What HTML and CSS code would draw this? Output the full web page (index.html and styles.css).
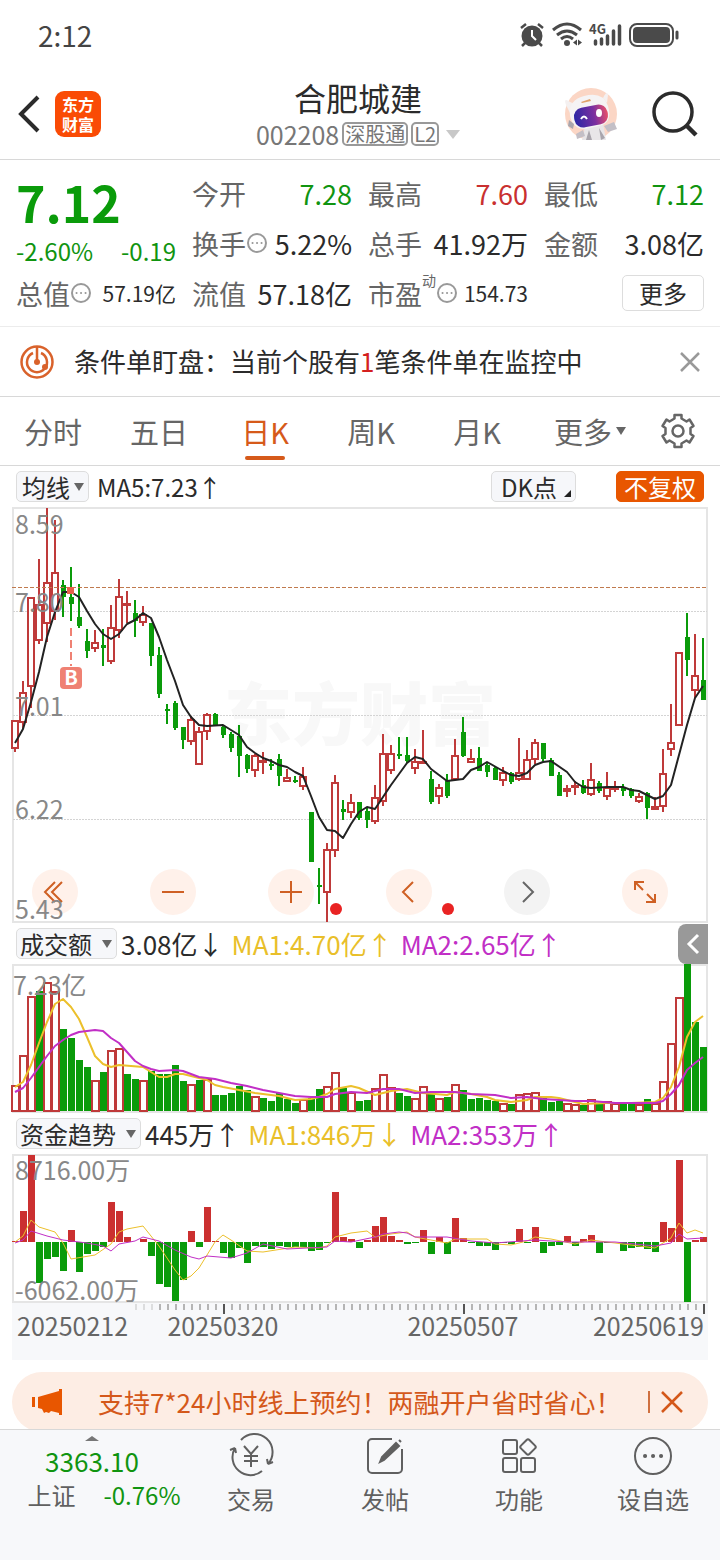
FILE: index.html
```html
<!DOCTYPE html>
<html lang="zh-CN">
<head>
    <meta charset="UTF-8">
    <meta name="viewport" content="width=device-width, initial-scale=1.0">
    <title>合肥城建 002208</title>
    <link rel="stylesheet" href="styles.css">
</head>
<body>

<div class="status-bar">
    <span>2:12</span>
    <svg width="160" height="28" viewBox="0 0 160 28" fill="none" stroke="#4a4a4a">
        <!-- alarm -->
        <circle cx="12" cy="15" r="10.500" fill="#4a4a4a" stroke="none"/>
        <path d="M1 7l5-4M23 7l-5-4M5 22l-3 3M19 22l3 3" stroke-width="2.500"/>
        <path d="M12 9v6l4 4" stroke="#fff" stroke-width="2"/>
        <!-- wifi -->
        <path d="M33 9q14-12 28 0M37 14q10-8 20 0M41 18q6-5 12 0" stroke-width="3"/>
        <circle cx="47" cy="22" r="3" fill="#4a4a4a" stroke="none"/>
        <path d="M57 18.500v6l-4-3zM58 18.500v6l4-3z" fill="#4a4a4a" stroke="none"/>
        <!-- signal -->
        <text x="69" y="13" class="net-type">4G</text>
        <path d="M75.500 20v3M81.500 18v5M87.500 15v8M93.500 10v13M99.500 5v18" stroke-width="3.500" stroke-linecap="round"/>
        <!-- battery -->
        <rect x="110" y="3" width="43" height="22" rx="7" stroke-width="2"/>
        <rect x="113" y="6" width="37" height="16" rx="4" fill="#4a4a4a" stroke="none"/>
        <path d="M157 11v6" stroke-width="3" stroke-linecap="round"/>
    </svg>
</div>

<div class="header">
    <div class="header-left">
        <button class="icon-btn" aria-label="返回">
            <svg width="22" height="38" viewBox="0 0 22 38" fill="none" stroke="#2b2b2b" stroke-width="4"><path d="M20 2L3 19l17 17"/></svg>
        </button>
        <a href="#" class="logo">东方<br>财富</a>
    </div>
    <div class="header-title">
        <h1>合肥城建</h1>
        <div class="stock-code">
            <span>002208</span>
            <span class="tag">深股通</span>
            <span class="tag">L2</span>
            <i class="caret-light"></i>
        </div>
    </div>
    <div class="header-right">
        <button class="icon-btn" aria-label="助手">
            <svg width="54" height="54" viewBox="0 0 54 54">
                <circle cx="27" cy="27" r="26" fill="#fbd6c5"/>
                <path d="M2 18q-3-8 4-3l5 2-5 9zM39 11q4-8 5-3l-1 8z" fill="#f4f0f0"/>
                <path d="M18 53l3-14 18-3 3 17z" fill="#e8e6e8"/>
                <path d="M25 43l-3 10h6zM35 41l2 12 4-2z" fill="#a9a5ac"/>
                <path d="M40 39l10-4 3 7-9 3zM19 43l-7 4 1 5 8-3z" fill="#c3bfc6"/>
                <path d="M6 29Q4 13 20 9q19-5 24 10 5 17-9 20l-14 3Q9 42 6 29z" fill="#f5f3f4"/>
                <path d="M17 15l9-3 1 2-9 2z" fill="#e0a26a"/>
                <path d="M5 33l5 4-1 5-5-3z" fill="#aaa6ad"/>
                <rect x="10" y="19" width="34" height="20" rx="9" fill="url(#visor)" transform="rotate(-11 27 29)"/>
                <path d="M17 32q3-5 6 0" fill="none" stroke="#fff" stroke-width="2"/>
                <ellipse cx="35" cy="26" rx="3" ry="4" fill="#fff"/>
                <defs>
                    <linearGradient id="visor"><stop offset="0" stop-color="#2b27a5"/><stop offset=".6" stop-color="#7b2fa0"/><stop offset="1" stop-color="#e8506a"/></linearGradient>
                </defs>
            </svg>
        </button>
        <button class="icon-btn" aria-label="搜索">
            <svg width="46" height="46" viewBox="0 0 46 46" fill="none" stroke="#2b2b2b" stroke-width="3.500"><circle cx="21" cy="21" r="19"/><path d="M34 34l10 10" stroke-width="4.500"/></svg>
        </button>
    </div>
</div>

<div class="quote">
    <div class="price down">
        <strong>7.12</strong>
        <div class="change"><span>-2.60%</span><span>-0.19</span></div>
    </div>
    <div class="cell"><span>今开</span><b class="down">7.28</b></div>
    <div class="cell"><span>最高</span><b class="up">7.60</b></div>
    <div class="cell"><span>最低</span><b class="down">7.12</b></div>
    <div class="cell"><span>换手<svg class="dots" viewBox="0 0 20 20"><circle cx="10" cy="10" r="9"/><path d="M5.500 10h.1M10 10h.1M14.500 10h.1"/></svg></span><b>5.22%</b></div>
    <div class="cell"><span>总手</span><b>41.92万</b></div>
    <div class="cell"><span>金额</span><b>3.08亿</b></div>
    <div class="cell"><span>总值<svg class="dots" viewBox="0 0 20 20"><circle cx="10" cy="10" r="9"/><path d="M5.500 10h.1M10 10h.1M14.500 10h.1"/></svg></span><b class="small">57.19亿</b></div>
    <div class="cell"><span>流值</span><b>57.18亿</b></div>
    <div class="cell"><span>市盈<sup>动</sup><svg class="dots" viewBox="0 0 20 20"><circle cx="10" cy="10" r="9"/><path d="M5.500 10h.1M10 10h.1M14.500 10h.1"/></svg></span><b class="small">154.73</b></div>
    <div class="cell cell-more"><button class="more-btn">更多</button></div>
</div>

<div class="notice">
    <svg width="34" height="34" viewBox="0 0 34 34" fill="none" stroke="#d9622b" stroke-width="2.500">
        <circle cx="17" cy="17" r="15.500"/>
        <path d="M13 8a10 10 0 1 0 8 0M17 2v15"/>
        <circle cx="17" cy="17" r="3" fill="#d9622b" stroke="none"/>
        <circle cx="25" cy="22" r="3" fill="#d9622b" stroke="none"/>
    </svg>
    <p>条件单盯盘：当前个股有<em>1</em>笔条件单在监控中</p>
    <button class="icon-btn" aria-label="关闭">
        <svg width="20" height="20" viewBox="0 0 20 20" stroke="#999" stroke-width="2.500"><path d="M1 1l18 18M19 1L1 19"/></svg>
    </button>
</div>

<div class="tabs">
    <button>分时</button>
    <button>五日</button>
    <button class="active">日K</button>
    <button>周K</button>
    <button>月K</button>
    <button>更多<i class="caret"></i></button>
    <button class="gear" aria-label="设置">
        <svg width="36" height="36" viewBox="0 0 36 36" fill="none" stroke="#666" stroke-width="2.500" stroke-linejoin="round">
            <path d="M14.500 2h7v3.500l5 3 3-2 4 6.500-3 2v6l3 2-4 6.500-3-2-5 3V34h-7v-3.500l-5-3-3 2L2.500 23l3-2v-6l-3-2 4-6.500 3 2 5-3z"/>
            <circle cx="18" cy="18" r="5.500"/>
        </svg>
    </button>
</div>

<div class="charts">
    <div class="toolbar">
        <label class="chip"><select aria-label="指标"><option>均线</option></select><i class="caret"></i></label>
        <span class="ma5">MA5:7.23↑</span>
        <button class="chip dk">DK点<i class="corner"></i></button>
        <button class="chip adjust">不复权</button>
    </div>

    <div class="chart-box">
        <div class="chart-controls">
            <button aria-label="最左"><svg viewBox="0 0 46 46"><path d="M23 13L13 23l10 10M30 13L20 23l10 10"/></svg></button>
            <button aria-label="缩小"><svg viewBox="0 0 46 46"><path d="M12 23h22"/></svg></button>
            <button aria-label="放大"><svg viewBox="0 0 46 46"><path d="M12 23h22M23 12v22"/></svg></button>
            <button aria-label="左移"><svg viewBox="0 0 46 46"><path d="M27 13L17 23l10 10"/></svg></button>
            <button aria-label="右移" class="off"><svg viewBox="0 0 46 46"><path d="M19 13l10 10-10 10"/></svg></button>
            <button aria-label="全屏"><svg viewBox="0 0 46 46"><path d="M13 21v-8h9M13 13l8 8M33 25v8h-9M33 33l-8-8"/></svg></button>
        </div>
        <svg id="kline" class="chart" viewBox="12 507 696 416"></svg>
    </div>

    <div class="indicator">
        <label class="chip"><select aria-label="副图一" class="w3"><option>成交额</option></select><i class="caret"></i></label>
        <span>3.08亿↓</span>
        <span class="ma1">MA1:4.70亿↑</span>
        <span class="ma2">MA2:2.65亿↑</span>
        <button class="side-tab" aria-label="展开">
            <svg width="12" height="20" viewBox="0 0 12 20" fill="none" stroke="#fff" stroke-width="3"><path d="M11 1L2 10l9 9"/></svg>
        </button>
    </div>
    <svg id="volume" class="chart" viewBox="12 964 696 149"></svg>

    <div class="indicator">
        <label class="chip"><select aria-label="副图二" class="w4"><option>资金趋势</option></select><i class="caret"></i></label>
        <span>445万↑</span>
        <span class="ma1">MA1:846万↓</span>
        <span class="ma2">MA2:353万↑</span>
    </div>
    <svg id="flow" class="chart" viewBox="12 1154 696 149"></svg>
    <svg id="axis" class="chart axis" viewBox="12 1303 696 57"></svg>
</div>

<div class="banner-wrap">
    <div class="banner">
        <svg width="32" height="26" viewBox="0 0 32 26" fill="#e85600"><path d="M0 8h3v10H0zM6 8l21-6V0h3v26h-3v-2l-8-2-2 2-3-1-2 1-2-4-4-1z"/></svg>
        <a href="#">支持7*24小时线上预约！两融开户省时省心！</a>
        <button class="icon-btn" aria-label="关闭广告">
            <svg width="22" height="22" viewBox="0 0 22 22" stroke="#d4581a" stroke-width="2.500"><path d="M1 1l20 20M21 1L1 21"/></svg>
        </button>
    </div>
</div>

<div class="bottom-nav">
    <a href="#" class="index down">
        <i class="caret-up"></i>
        <b>3363.10</b>
        <span><small>上证</small>-0.76%</span>
    </a>
    <a href="#">
        <svg width="44" height="40" viewBox="0 0 44 40"><path d="M12 4a18 18 0 0 1 27 24M39 28l-1-5M39 28l5-2M33 35A18 18 0 0 1 6 12M6 12l1 5M6 12l-5 2"/><path d="M15 10l7 8 7-8M22 18v13M15 20h14M15 25h14"/></svg>
        交易
    </a>
    <a href="#">
        <svg width="38" height="40" viewBox="0 0 38 40"><path d="M26 3H6a4 4 0 0 0-4 4v26a4 4 0 0 0 4 4h26a4 4 0 0 0 4-4V13"/><path d="M14 26l2-5L30 7l3 3-15 14zM33 4l2 2" fill="#606060"/></svg>
        发帖
    </a>
    <a href="#">
        <svg width="36" height="40" viewBox="0 0 36 40"><rect x="2" y="4" width="14" height="14" rx="2"/><rect x="2" y="22" width="14" height="14" rx="2"/><rect x="20" y="22" width="14" height="14" rx="2"/><rect x="21" y="5" width="12" height="12" rx="2" transform="rotate(45 27 11)"/></svg>
        功能
    </a>
    <a href="#">
        <svg width="40" height="40" viewBox="0 0 40 40"><circle cx="20" cy="20" r="18"/><path d="M12 20h.1M20 20h.1M28 20h.1" stroke-width="4" stroke-linecap="round"/></svg>
        设自选
    </a>
</div>

<script src="charts.js"></script>
</body>
</html>
```

FILE: styles.css
```css
* {
    box-sizing: border-box;
}
body {
    margin: 0;
    min-height: 100vh;
    display: flex;
    flex-direction: column;
    background: #fff;
    color: #2b2b2b;
    font-family: "Noto Sans CJK SC", "Noto Sans", sans-serif;
    font-size: 24px;
}
button,
select {
    font: inherit;
    color: inherit;
    background: none;
    border: none;
    padding: 0;
    cursor: pointer;
}
a {
    color: inherit;
    text-decoration: none;
}
svg {
    display: block;
    flex: none;
    overflow: visible;
}
.up {
    color: #c93030;
}
.down {
    color: #109410;
}
.icon-btn {
    display: flex;
}

/* status bar */
.status-bar {
    display: flex;
    justify-content: space-between;
    align-items: center;
    height: 72px;
    padding: 0 40px 2px 38px;
    color: #444;
    font-size: 28px;
}
.net-type {
    font-size: 13px;
    font-weight: bold;
    fill: #4a4a4a;
    stroke: none;
}

/* header */
.header {
    display: grid;
    grid-template-columns: 1fr auto 1fr;
    align-items: center;
    height: 88px;
    padding: 0 22px 3px 18px;
    border-bottom: 1px solid #d8d8d8;
}
.header-left {
    display: flex;
    align-items: center;
    gap: 15px;
}
.logo {
    width: 46px;
    height: 46px;
    padding-top: 3px;
    border-radius: 9px;
    background: #fa4b05;
    color: #fff;
    font-size: 16px;
    font-weight: bold;
    line-height: 20px;
    text-align: center;
}
.header-title h1 {
    margin: 0;
    font-size: 32px;
    font-weight: normal;
    line-height: 40px;
    text-align: center;
}
.stock-code {
    display: flex;
    align-items: center;
    gap: 3px;
    color: #777;
    font-size: 25px;
    line-height: 34px;
}
.tag {
    padding: 0 1px;
    border: 2px solid #999;
    border-radius: 5px;
    font-size: 20px;
    line-height: 20px;
}
.header-right {
    display: flex;
    justify-content: flex-end;
    align-items: center;
    gap: 34px;
}
.caret-light {
    margin-left: 4px;
    border: 7px solid transparent;
    border-top: 9px solid #c8c8c8;
    border-bottom: none;
}

/* quote */
.quote {
    display: grid;
    grid-template-columns: repeat(4, 1fr);
    grid-auto-rows: 50px;
    column-gap: 16px;
    padding: 8px 16px;
    border-bottom: 1px solid #ececec;
    font-size: 27px;
}
.price {
    grid-row: span 2;
}
.price strong {
    display: block;
    font-size: 50px;
    line-height: 66px;
    color: #0a9b0a;
}
.change {
    display: flex;
    justify-content: space-between;
    font-size: 24px;
    line-height: 34px;
}
.cell {
    display: flex;
    justify-content: space-between;
    align-items: center;
    white-space: nowrap;
}
.cell span {
    display: flex;
    align-items: center;
    color: #666;
}
.cell b {
    font-weight: normal;
}
.cell .small {
    font-size: 21px;
}
.cell sup {
    align-self: flex-start;
    font-size: 14px;
    line-height: 12px;
}
.dots {
    width: 20px;
    height: 20px;
    margin-left: 1px;
    fill: none;
    stroke: #999;
    stroke-width: 2;
    stroke-linecap: round;
}
.cell-more {
    justify-content: flex-end;
}
.more-btn {
    width: 82px;
    height: 36px;
    border: 1px solid #ddd;
    border-radius: 5px;
    font-size: 24px;
    line-height: 32px;
}

/* notice */
.notice {
    display: flex;
    align-items: center;
    height: 70px;
    padding: 0 20px;
    border-bottom: 1px solid #d8d8d8;
    font-size: 26px;
}
.notice p {
    flex: 1;
    margin: 0 0 2px 20px;
}
.notice em {
    color: #d42020;
    font-style: normal;
}

/* tabs */
.tabs {
    display: grid;
    grid-template-columns: repeat(5, 106fr) 120fr 70fr;
    height: 69px;
    border-bottom: 1px solid #d8d8d8;
    color: #666;
    font-size: 29px;
}
.tabs button {
    position: relative;
    display: flex;
    align-items: center;
    justify-content: center;
}
.tabs .active {
    color: #d65a1a;
}
.tabs .active::after {
    content: "";
    position: absolute;
    bottom: 5px;
    width: 40px;
    height: 4px;
    border-radius: 2px;
    background: #d65a1a;
}
.tabs .gear {
    padding-right: 14px;
}
.caret {
    margin-left: 4px;
    border: 5px solid transparent;
    border-top: 8px solid #666;
    border-bottom: none;
}

/* charts */
.charts {
    padding: 0 12px;
}
.toolbar,
.indicator {
    display: flex;
    align-items: center;
    height: 41px;
    padding-left: 4px;
    white-space: nowrap;
}
.toolbar {
    padding-right: 4px;
}
.chip {
    display: flex;
    align-items: center;
    height: 31px;
    padding: 0 4px 0 5px;
    border: 1px solid #ddd;
    border-radius: 5px;
    background: #f6f7fa;
    font-size: 24px;
    line-height: 28px;
}
.chip select {
    appearance: none;
    width: 48px;
    height: 28px;
    outline: none;
}
.chip .w3 {
    width: 78px;
}
.chip .w4 {
    width: 102px;
}
.indicator .chip {
    margin-right: -4px;
    padding: 0 4px 0 3px;
}
.ma5 {
    flex: 1;
    margin-left: 8px;
}
.dk {
    position: relative;
    width: 85px;
    padding-left: 9px;
}
.corner {
    position: absolute;
    right: 4px;
    bottom: 4px;
    border-left: 7px solid transparent;
    border-bottom: 7px solid #222;
}
.adjust {
    margin-left: 40px;
    padding: 0 7px;
    border-color: #e85600;
    background: #e85600;
    color: #fff;
}
.indicator {
    gap: 8px;
    font-size: 26px;
}
.ma1 {
    color: #e9bf2a;
}
.ma2 {
    color: #c12fc6;
}
.side-tab {
    display: flex;
    align-items: center;
    justify-content: center;
    width: 30px;
    height: 40px;
    margin-left: auto;
    border-radius: 8px 0 0 8px;
    background: #999;
}
.chart-box {
    position: relative;
}
.chart {
    position: relative;
    width: 100%;
    height: auto;
    pointer-events: none;
}
.chart text {
    font-size: 25px;
    fill: #888;
}
.chart .watermark {
    font-size: 68px;
    font-weight: 900;
    fill: #f8f8f8;
}
.chart .mark {
    font-size: 20px;
    font-weight: bold;
    fill: #fff;
}
.axis {
    background: #f7f8fa;
}
.axis text {
    fill: #666;
}
.chart-controls {
    position: absolute;
    left: 20px;
    right: 40px;
    bottom: 8px;
    display: flex;
    justify-content: space-between;
}
.chart-controls button {
    width: 46px;
    height: 46px;
    border-radius: 50%;
    background: #fff1ea;
}
.chart-controls .off {
    background: #f3f3f3;
}
.chart-controls path {
    fill: none;
    stroke: #cf6024;
    stroke-width: 2;
}
.chart-controls .off path {
    stroke: #666;
}

/* banner */
.banner-wrap {
    height: 69px;
    padding: 12px 12px 0;
    overflow: hidden;
}
.banner {
    display: flex;
    align-items: center;
    height: 60px;
    padding: 0 25px 0 20px;
    border-radius: 30px;
    background: #fdede4;
    color: #d4581a;
    font-size: 26px;
}
.banner a {
    flex: 1;
    margin: 0 0 2px 34px;
    white-space: nowrap;
}
.banner button {
    padding-left: 11px;
    border-left: 2px solid #cf7040;
}

/* bottom nav */
.bottom-nav {
    flex: 1;
    display: grid;
    grid-template-columns: 184fr repeat(4, 134fr);
    min-height: 131px;
    border-top: 1px solid #d8d8d8;
    background: #f7f8fa;
    color: #606060;
}
.bottom-nav a {
    display: flex;
    flex-direction: column;
    align-items: center;
    gap: 5px;
    padding-top: 6px;
    line-height: 36px;
}
.bottom-nav svg {
    fill: none;
    stroke: #606060;
    stroke-width: 2;
}
.bottom-nav .index {
    gap: 0;
    color: #109410;
}
.index b {
    font-size: 26px;
    font-weight: normal;
    line-height: 40px;
}
.index span {
    display: flex;
    gap: 28px;
    padding-left: 24px;
    line-height: 28px;
}
.index small {
    color: #606060;
    font-size: 24px;
}
.caret-up {
    border: 7px solid transparent;
    border-top: none;
    border-bottom: 5px solid #777;
}
```

FILE: charts.js
```js
const RED = "#bf3a3a";
const GREEN = "#0a9b0a";
const SOLID_RED = "#cb3030";
const YELLOW = "#ecc02c";
const PURPLE = "#c12fc6";

// x centre of the n-th trading day
const cx = (i) => 15 + i * 8;

// [up/down, high, body top, body bottom, low]
const candles = [
    ["r",720,720,748,752],["r",681,692,722,729],["r",597,597,686,708],["r",559,604,640,644],["r",508,582,623,642],
    ["r",520,572,611,620],["g",580,585,597,617],["g",567,597,604,621],["g",584,617,626,628],["g",629,641,651,658],
    ["r",630,642,648,652],["g",629,645,648,666],["r",605,627,661,664],["r",579,596,630,638],["r",591,603,605,623],
    ["g",600,613,621,637],["r",606,614,622,626],["g",623,623,656,666],["g",647,655,694,698],["g",704,709,711,724],
    ["g",701,703,728,730],["g",727,727,740,749],["r",716,719,741,745],["r",727,731,764,765],["r",713,714,731,740],
    ["g",713,714,726,726],["g",726,727,735,738],["g",732,734,748,752],["g",725,736,756,777],["g",754,755,769,773],
    ["r",754,755,770,777],["r",752,760,762,774],["g",759,764,766,770],["g",754,759,776,786],["r",769,777,781,782],
    ["g",776,780,782,783],["r",767,776,786,790],["g",812,812,862,862],["g",868,885,886,904],["r",843,849,892,922],
    ["r",775,782,850,857],["g",800,809,812,820],["r",794,802,812,818],["g",802,802,818,820],["g",808,811,820,828],
    ["r",785,797,821,824],["r",734,753,801,806],["r",745,753,770,774],["g",737,754,756,759],["g",737,755,761,763],
    ["r",749,761,768,774],["r",730,761,763,764],["g",771,779,802,804],["r",784,787,796,804],["g",774,781,796,798],
    ["r",739,755,779,779],["g",717,732,756,757],["r",749,758,762,762],["g",747,758,771,771],["g",762,765,772,777],
    ["g",766,768,780,780],["r",767,772,780,786],["g",772,773,782,784],["r",738,772,779,781],["r",750,759,779,779],
    ["r",739,742,759,764],["g",743,743,759,761],["g",758,760,776,776],["g",772,775,796,796],["r",785,788,791,797],
    ["r",781,785,787,795],["g",780,785,793,794],["r",763,779,794,796],["g",781,783,791,793],["r",772,787,796,800],
    ["r",781,787,788,792],["g",784,788,791,796],["g",788,789,796,798],["r",793,796,801,803],["g",792,793,808,819],
    ["r",797,806,809,809],["r",749,773,806,812],["r",704,742,749,756],["r",652,652,725,725],["g",613,637,660,676],
    ["r",634,675,690,698],["g",638,680,700,700]
];

const ma5 = [
    15,743, 23,729, 31,702, 39,672, 47,637, 55,612, 63,592, 71,592, 79,597, 87,611, 95,624, 103,634, 111,639,
    119,634, 127,624, 135,620, 143,613, 151,618, 159,637, 167,660, 175,681, 183,705, 191,717, 199,725, 207,726,
    223,725, 239,735, 247,747, 255,753, 263,758, 271,761, 279,765, 287,767, 295,772, 303,776, 311,796, 319,817,
    327,830, 335,831, 343,838, 351,824, 359,812, 367,807, 375,809, 383,797, 391,785, 399,774, 407,763, 415,757,
    423,759, 431,769, 447,781, 463,779, 471,770, 479,767, 487,762, 503,771, 511,775, 519,776, 527,773, 535,765,
    543,762, 551,761, 567,772, 575,782, 583,787, 591,788, 607,787, 623,787, 631,790, 639,791, 647,795, 655,799,
    663,796, 671,785, 679,755, 687,725, 695,698, 703,686
];

const volumeColors = "rrrgrrggggrgrrggrgggggrgrgggggrgggggrggrrgrggrrrggrrgrgrgggggrgrrrgggrrgrgrrggrgrrrrggg";
const volumes = [
    26,56,115,120,129,120,82,73,51,44,31,39,61,63,37,32,31,40,37,37,46,30,27,31,32,16,16,18,25,21,15,13,10,18,12,8,
    12,13,22,25,39,23,19,10,11,23,37,24,18,15,13,25,17,13,14,27,21,12,13,11,10,8,7,17,18,19,14,9,10,8,7,6,12,8,10,
    8,8,8,7,12,8,30,68,114,147,89,64
];
// moving averages: day index, y
const volMa1 = [
    0,1087, 1,1082, 2,1065, 3,1043, 4,1022, 5,1004, 6,999, 7,1007, 8,1019, 9,1037, 10,1056, 11,1064, 12,1067,
    13,1065, 16,1067, 17,1072, 18,1077, 19,1077, 20,1074, 21,1074, 23,1078, 24,1080, 25,1085, 26,1087, 28,1090,
    30,1093, 33,1096, 35,1100, 37,1099, 38,1097, 39,1094, 40,1089, 42,1086, 43,1088, 45,1095, 47,1091, 49,1089,
    51,1093, 54,1095, 55,1092, 57,1094, 59,1097, 60,1100, 62,1102, 64,1100, 65,1097, 67,1097, 68,1098, 70,1102,
    71,1104, 74,1103, 77,1103, 80,1102, 81,1098, 82,1087, 83,1067, 84,1037, 85,1022, 86,1016
];
const volMa2 = [
    0,1092, 1,1088, 2,1078, 4,1056, 5,1046, 6,1040, 7,1035, 8,1032, 10,1030, 11,1031, 12,1038, 13,1043, 14,1052,
    15,1061, 16,1066, 17,1069, 18,1071, 20,1070, 21,1071, 22,1074, 23,1077, 25,1079, 27,1083, 29,1086, 31,1090,
    33,1093, 35,1096, 37,1097, 39,1097, 40,1094, 42,1092, 44,1093, 46,1089, 48,1089, 50,1093, 52,1092, 55,1092,
    57,1094, 60,1095, 62,1098, 64,1097, 66,1099, 70,1101, 72,1101, 75,1103, 80,1103, 81,1101, 82,1094, 83,1085,
    84,1070, 85,1063, 86,1057
];

const flows = [
    1,31,87,-41,-17,-15,-29,12,-30,-12,-9,-5,40,31,5,0,3,-14,-42,-45,-59,-38,11,-5,35,1,-11,-16,-6,-21,-4,-5,-7,-4,
    -5,-5,-5,-9,-8,-1,50,5,3,-6,2,16,25,6,2,-2,-1,12,-12,5,-12,24,4,-1,-4,-4,-8,-1,-2,13,-1,15,-11,-4,-3,6,-4,3,7,
    -11,-1,0,-9,-6,-5,-7,-10,20,14,82,-60,2,5
];
const flowMa1 = [
    0,1242, 1,1236, 2,1220, 3,1227, 5,1232, 6,1243, 7,1259, 10,1255, 12,1244, 13,1232, 14,1229, 16,1226, 18,1246,
    20,1270, 21,1280, 22,1276, 23,1268, 25,1242, 26,1235, 27,1240, 29,1251, 31,1252, 35,1247, 38,1248, 39,1246,
    40,1237, 42,1233, 44,1231, 45,1237, 47,1234, 49,1232, 50,1237, 52,1240, 54,1243, 55,1239, 59,1239, 60,1244,
    62,1245, 64,1241, 65,1237, 67,1239, 70,1244, 72,1240, 76,1244, 80,1248, 81,1243, 82,1238, 83,1223, 84,1233,
    85,1230, 86,1233
];
const flowMa2 = [
    0,1243, 1,1240, 2,1231, 4,1236, 6,1240, 9,1243, 11,1246, 12,1251, 13,1244, 15,1241, 16,1237, 18,1241, 20,1250,
    22,1257, 23,1259, 24,1256, 27,1258, 29,1253, 31,1244, 34,1249, 39,1247, 40,1241, 42,1242, 45,1237, 46,1234,
    48,1232, 49,1233, 50,1237, 54,1237, 57,1241, 60,1243, 65,1240, 69,1242, 75,1242, 80,1246, 82,1243, 83,1234,
    84,1239, 86,1238
];

function rect(x, y, w, h, fill, stroke) {
    return `<rect x="${x}" y="${y}" width="${w}" height="${h}" fill="${fill}"` +
        (stroke ? ` stroke="${stroke}" stroke-width="2"` : "") + "/>";
}

function line(x1, y1, x2, y2, color, width, extra = "") {
    return `<line x1="${x1}" y1="${y1}" x2="${x2}" y2="${y2}" stroke="${color}" stroke-width="${width}" ${extra}/>`;
}

function text(x, y, value, extra = "") {
    return `<text x="${x}" y="${y}" ${extra}>${value}</text>`;
}

function poly(points, color, width) {
    return `<polyline points="${points.join(" ")}" fill="none" stroke="${color}" stroke-width="${width}" stroke-linejoin="round"/>`;
}

function byDay(list) {
    return list.map((v, n) => (n % 2 ? v : cx(v)));
}

function frame(top, bottom) {
    return `<rect x="13" y="${top + 1}" width="694" height="${bottom - top - 2}" fill="none" stroke="#e5e5e5" stroke-width="2"/>`;
}

function drawKline() {
    let out = text(360, 740, "东方财富", 'class="watermark" text-anchor="middle"');
    out += frame(507, 923);
    for (const y of [611, 715, 819]) {
        out += line(13, y + 0.5, 707, y + 0.5, "#d4d4d4", 1, 'stroke-dasharray="2 1"');
    }
    candles.forEach(([dir, high, top, bottom, low], i) => {
        const x = cx(i);
        if (dir === "r") {
            out += line(x, high, x, top, RED, 2) + line(x, bottom, x, low, RED, 2);
            out += rect(x - 3, top + 1, 6, Math.max(bottom - top - 1, 1), "#fff", RED);
        } else {
            out += line(x, high, x, low, GREEN, 2);
            out += rect(x - 2, top, 5, Math.max(bottom - top, 2), GREEN);
        }
    });
    out += line(12, 587.5, 708, 587.5, "#c07a4e", 1, 'stroke-dasharray="4 2"');
    out += poly(ma5, "#222", 2);
    // buy mark
    out += rect(67, 587, 7, 7, "#e8604a");
    out += line(71, 628, 71, 666, "#ef8173", 2, 'stroke-dasharray="8 4"');
    out += '<rect x="60" y="667" width="22" height="22" rx="4" fill="#ef8173"/>';
    out += text(71, 685, "B", 'class="mark" text-anchor="middle"');
    out += '<circle cx="336" cy="909" r="6" fill="#e92323"/><circle cx="448" cy="909" r="6" fill="#e92323"/>';
    out += text(15, 534, "8.59") + text(15, 612, "7.80") + text(15, 716, "7.01") + text(15, 819, "6.22") + text(15, 919, "5.43");
    document.getElementById("kline").innerHTML = out;
}

function drawVolume() {
    let out = frame(964, 1113);
    volumes.forEach((h, i) => {
        if (volumeColors[i] === "r") {
            out += rect(cx(i) - 3, 1112 - h, 7, h - 1, "#fff", RED);
        } else {
            out += rect(cx(i) - 3, 1111 - h, 7, h, GREEN);
        }
    });
    out += poly(byDay(volMa1), YELLOW, 2) + poly(byDay(volMa2), PURPLE, 2);
    out += text(13, 995, "7.23亿");
    document.getElementById("volume").innerHTML = out;
}

function drawFlow() {
    let out = frame(1154, 1303);
    flows.forEach((v, i) => {
        out += v > 0 ? rect(cx(i) - 3, 1242 - v, 7, v, SOLID_RED) : rect(cx(i) - 3, 1242, 7, -v, GREEN);
    });
    out += poly(byDay(flowMa1), YELLOW, 1) + poly(byDay(flowMa2), PURPLE, 1);
    out += text(15, 1180, "8716.00万") + text(15, 1300, "-6062.00万");
    document.getElementById("flow").innerHTML = out;
}

function drawAxis() {
    let out = "";
    for (let i = 15; i < 87; i++) {
        const major = i === 26 || i === 56 || i === 86;
        out += line(cx(i) + 1, 1304, cx(i) + 1, major ? 1314 : 1310, major ? "#555" : "#b5b5b5", 2, i < 18 ? 'opacity=".4"' : "");
    }
    out += text(17, 1336, "20250212");
    out += text(223, 1336, "20250320", 'text-anchor="middle"');
    out += text(463, 1336, "20250507", 'text-anchor="middle"');
    out += text(704, 1336, "20250619", 'text-anchor="end"');
    document.getElementById("axis").innerHTML = out;
}

drawKline();
drawVolume();
drawFlow();
drawAxis();
```
